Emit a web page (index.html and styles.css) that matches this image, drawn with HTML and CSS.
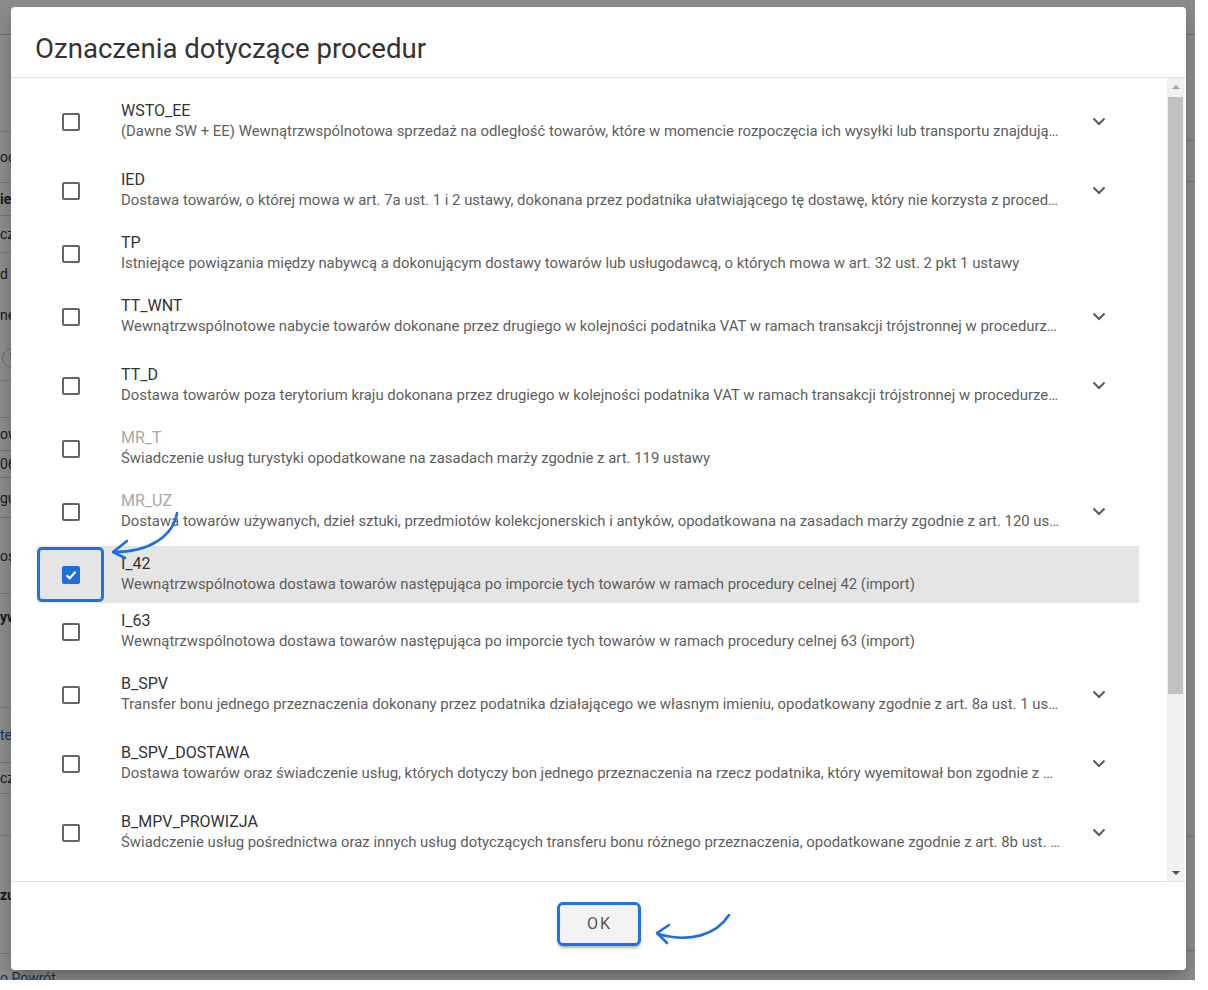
FILE: index.html
```html
<!DOCTYPE html>
<html lang="pl">
<head>
<meta charset="utf-8">
<title>Oznaczenia dotyczące procedur</title>
<link rel="stylesheet" href="styles.css">
</head>
<body>
<div class="screen">
  <div class="page">
    <div class="page-top"></div>
    <div class="page-main">
      <div class="col-left">
        <div class="bg-row h96"></div>
        <div class="bg-row h50"><span class="frag">ocja</span></div>
        <div class="bg-row h32"><span class="frag b">ie</span></div>
        <div class="bg-row h36"><span class="frag">cz</span></div>
        <div class="bg-row h127 stack"><span class="frag">d</span><span class="frag">ne</span><span class="frag chip">1</span></div>
        <div class="bg-row h36"></div>
        <div class="bg-row h32"><span class="frag">ow</span></div>
        <div class="bg-row h26"><span class="frag">06</span></div>
        <div class="bg-row h39"><span class="frag">gu</span></div>
        <div class="bg-row h75"><span class="frag">oś</span></div>
        <div class="bg-row h113 top"><span class="frag b">yw</span></div>
        <div class="bg-row h54"><span class="frag link">te</span></div>
        <div class="bg-row h30"><span class="frag">cz</span></div>
        <div class="bg-row h41"></div>
        <div class="bg-row h117"><span class="frag b">zu</span></div>
        <div class="bg-row last"><span class="frag link">o Powrót</span></div>
      </div>
      <div class="col-right">
        <div class="bg-row h105"></div>
        <div class="bg-row h40"></div>
        <div class="bg-row h654"></div>
        <div class="bg-row h113"></div>
      </div>
    </div>
  </div>

  <div class="overlay"></div>

  <div class="dialog" role="dialog">
    <header class="dlg-head"><h1>Oznaczenia dotyczące procedur</h1></header>

    <div class="dlg-body">
      <div class="list">
        <div class="opt exp">
          <div class="cbcell"><span class="cb"></span></div>
          <div class="txt"><div class="code">WSTO_EE</div><div class="desc">(Dawne SW + EE) Wewnątrzwspólnotowa sprzedaż na odległość towarów, które w momencie rozpoczęcia ich wysyłki lub transportu znajdują się na terytorium kraju</div></div>
          <div class="chev"><svg width="14" height="9" viewBox="0 0 14 9"><path d="M1.5 1.5 L7 7 L12.5 1.5"/></svg></div>
        </div>
        <div class="opt exp">
          <div class="cbcell"><span class="cb"></span></div>
          <div class="txt"><div class="code">IED</div><div class="desc">Dostawa towarów, o której mowa w art. 7a ust. 1 i 2 ustawy, dokonana przez podatnika ułatwiającego tę dostawę, który nie korzysta z procedury szczególnej</div></div>
          <div class="chev"><svg width="14" height="9" viewBox="0 0 14 9"><path d="M1.5 1.5 L7 7 L12.5 1.5"/></svg></div>
        </div>
        <div class="opt">
          <div class="cbcell"><span class="cb"></span></div>
          <div class="txt"><div class="code">TP</div><div class="desc">Istniejące powiązania między nabywcą a dokonującym dostawy towarów lub usługodawcą, o których mowa w art. 32 ust. 2 pkt 1 ustawy</div></div>
          <div class="chev"></div>
        </div>
        <div class="opt exp">
          <div class="cbcell"><span class="cb"></span></div>
          <div class="txt"><div class="code">TT_WNT</div><div class="desc">Wewnątrzwspólnotowe nabycie towarów dokonane przez drugiego w kolejności podatnika VAT w ramach transakcji trójstronnej w procedurze uproszczonej</div></div>
          <div class="chev"><svg width="14" height="9" viewBox="0 0 14 9"><path d="M1.5 1.5 L7 7 L12.5 1.5"/></svg></div>
        </div>
        <div class="opt exp">
          <div class="cbcell"><span class="cb"></span></div>
          <div class="txt"><div class="code">TT_D</div><div class="desc">Dostawa towarów poza terytorium kraju dokonana przez drugiego w kolejności podatnika VAT w ramach transakcji trójstronnej w procedurze uproszczonej</div></div>
          <div class="chev"><svg width="14" height="9" viewBox="0 0 14 9"><path d="M1.5 1.5 L7 7 L12.5 1.5"/></svg></div>
        </div>
        <div class="opt">
          <div class="cbcell"><span class="cb"></span></div>
          <div class="txt"><div class="code dim">MR_T</div><div class="desc">Świadczenie usług turystyki opodatkowane na zasadach marży zgodnie z art. 119 ustawy</div></div>
          <div class="chev"></div>
        </div>
        <div class="opt exp">
          <div class="cbcell"><span class="cb"></span></div>
          <div class="txt"><div class="code dim">MR_UZ</div><div class="desc">Dostawa towarów używanych, dzieł sztuki, przedmiotów kolekcjonerskich i antyków, opodatkowana na zasadach marży zgodnie z art. 120 ustawy</div></div>
          <div class="chev"><svg width="14" height="9" viewBox="0 0 14 9"><path d="M1.5 1.5 L7 7 L12.5 1.5"/></svg></div>
        </div>
        <div class="opt sel">
          <div class="cbcell mark"><span class="cb on"><svg width="14" height="14" viewBox="0 0 14 14"><path d="M2.5 7.2 L5.6 10.2 L11.6 3.8"/></svg></span></div>
          <div class="txt"><div class="code">I_42</div><div class="desc">Wewnątrzwspólnotowa dostawa towarów następująca po imporcie tych towarów w ramach procedury celnej 42 (import)</div></div>
          <div class="chev"></div>
        </div>
        <div class="opt">
          <div class="cbcell"><span class="cb"></span></div>
          <div class="txt"><div class="code">I_63</div><div class="desc">Wewnątrzwspólnotowa dostawa towarów następująca po imporcie tych towarów w ramach procedury celnej 63 (import)</div></div>
          <div class="chev"></div>
        </div>
        <div class="opt exp">
          <div class="cbcell"><span class="cb"></span></div>
          <div class="txt"><div class="code">B_SPV</div><div class="desc">Transfer bonu jednego przeznaczenia dokonany przez podatnika działającego we własnym imieniu, opodatkowany zgodnie z art. 8a ust. 1 ustawy</div></div>
          <div class="chev"><svg width="14" height="9" viewBox="0 0 14 9"><path d="M1.5 1.5 L7 7 L12.5 1.5"/></svg></div>
        </div>
        <div class="opt exp">
          <div class="cbcell"><span class="cb"></span></div>
          <div class="txt"><div class="code">B_SPV_DOSTAWA</div><div class="desc">Dostawa towarów oraz świadczenie usług, których dotyczy bon jednego przeznaczenia na rzecz podatnika, który wyemitował bon zgodnie z art. 8a ust. 4 ustawy</div></div>
          <div class="chev"><svg width="14" height="9" viewBox="0 0 14 9"><path d="M1.5 1.5 L7 7 L12.5 1.5"/></svg></div>
        </div>
        <div class="opt exp">
          <div class="cbcell"><span class="cb"></span></div>
          <div class="txt"><div class="code">B_MPV_PROWIZJA</div><div class="desc">Świadczenie usług pośrednictwa oraz innych usług dotyczących transferu bonu różnego przeznaczenia, opodatkowane zgodnie z art. 8b ust. 2 ustawy</div></div>
          <div class="chev"><svg width="14" height="9" viewBox="0 0 14 9"><path d="M1.5 1.5 L7 7 L12.5 1.5"/></svg></div>
        </div>
      </div>

      <div class="sbar">
        <div class="sb-btn"><span class="tri up"></span></div>
        <div class="sb-track"><div class="sb-thumb"></div></div>
        <div class="sb-btn"><span class="tri down"></span></div>
      </div>
    </div>

    <footer class="dlg-foot"><button class="ok" type="button">OK</button></footer>
  </div>

  <svg class="annot" width="1195" height="980" viewBox="0 0 1195 980">
    <path d="M177 513 C 173 536, 150 552, 114 552"/>
    <path d="M127 541 L113 552 L125 558"/>
    <path d="M729 915 C 716 935, 690 943, 658 934"/>
    <path d="M669 925 L657 933 L667 943"/>
  </svg>
</div>
</body>
</html>
```

FILE: styles.css
```css
* { box-sizing: border-box; margin: 0; padding: 0; }
html, body { background: #fff; }
body { margin: 0; font-family: Roboto, "Liberation Sans", Arial, sans-serif; }

.screen { position: relative; width: 1195px; height: 980px; overflow: hidden; }

/* page behind the modal */
.page { width: 100%; height: 100%; display: flex; flex-direction: column; background: #fff; color: #333; font-size: 14px; }
.page-top { height: 35px; flex: none; border-bottom: 1px solid #c8c8c8; background: #fbfbfb; }
.page-main { flex: 1; display: flex; }
.col-left { flex: 1; display: flex; flex-direction: column; }
.col-right { width: 200px; display: flex; flex-direction: column; }
.bg-row { flex: none; display: flex; align-items: center; border-bottom: 1px solid #d0d0d0; }
.bg-row.stack { flex-direction: column; align-items: flex-start; justify-content: space-around; }
.bg-row.top { align-items: flex-start; padding-top: 14px; }
.bg-row.last { flex: 1; align-items: flex-start; padding-top: 15px; border-bottom: 0; }
.frag { white-space: nowrap; line-height: 18px; }
.frag.b { font-weight: 700; }
.frag.link { color: #2a5db0; }
.frag.chip { border: 1px solid #bbb; border-radius: 10px; padding: 0 6px; margin-left: 2px; }
.h26 { height: 27px; } .h30 { height: 31px; } .h32 { height: 33px; } .h36 { height: 37px; }
.h39 { height: 40px; } .h40 { height: 41px; } .h41 { height: 42px; } .h50 { height: 51px; }
.h54 { height: 55px; } .h75 { height: 76px; } .h96 { height: 97px; } .h105 { height: 106px; }
.h113 { height: 114px; } .h117 { height: 118px; } .h127 { height: 128px; } .h654 { height: 655px; }

.overlay { position: absolute; inset: 0; background: rgba(0, 0, 0, 0.45); }

/* dialog */
.dialog {
  position: absolute; left: 11px; top: 7px; width: 1175px; height: 963px;
  background: #fff; border-radius: 4px; overflow: hidden;
  display: flex; flex-direction: column;
  box-shadow: 0 8px 12px -6px rgba(0, 0, 0, 0.25), 0 14px 22px 2px rgba(0, 0, 0, 0.12);
}
.dlg-head { flex: none; height: 71px; padding: 26px 24px 0; border-bottom: 1px solid #e2e2e2; }
.dlg-head h1 { font-size: 27.6px; font-weight: 400; line-height: 32px; color: #333; }

.dlg-body { flex: 1; min-height: 0; display: flex; overflow: hidden; }
.list { flex: 1; min-width: 0; padding: 9px 28px 0 26px; display: flex; flex-direction: column; overflow: hidden; }
.opt { flex: none; height: 57px; display: flex; align-items: center; }
.opt.exp { height: 69px; }
.opt.sel { background: #e5e5e5; }

.cbcell { flex: none; width: 67px; height: 55px; border: 3px solid transparent; border-radius: 5px; display: flex; align-items: center; justify-content: center; }
.cbcell.mark { border-color: #2171e0; }
.cb { width: 18px; height: 18px; border: 2px solid #646464; border-radius: 2px; display: flex; align-items: center; justify-content: center; }
.cb.on { background: #1f6fd8; border-color: #1f6fd8; }
.cb svg path { fill: none; stroke: #fff; stroke-width: 2; }

.txt { flex: 1; min-width: 0; margin: 0 6px 0 17px; }
.code { font-size: 16px; line-height: 20px; color: #333; }
.code.dim { color: #a8a8a8; }
.desc { font-size: 14.9px; line-height: 21px; color: #5e5e5e; white-space: nowrap; overflow: hidden; text-overflow: ellipsis; }

.chev { flex: none; width: 48px; margin: 0 16px 0 9px; display: flex; justify-content: center; align-items: center; }
.chev svg path { fill: none; stroke: #5a5a5a; stroke-width: 2; }

.sbar { flex: none; width: 17px; margin-right: 2px; background: #f1f1f1; display: flex; flex-direction: column; }
.sb-btn { flex: none; height: 17px; display: flex; align-items: center; justify-content: center; }
.sb-track { flex: 1; padding: 2px 1px 0; }
.sb-thumb { height: 597px; background: #c1c1c1; }
.tri { width: 0; height: 0; border-left: 4px solid transparent; border-right: 4px solid transparent; }
.tri.up { border-bottom: 4px solid #a3a3a3; }
.tri.down { border-top: 4px solid #505050; }

.dlg-foot { flex: none; height: 89px; padding-bottom: 5px; border-top: 1px solid #e2e2e2; display: flex; align-items: center; justify-content: center; }
.ok {
  width: 84px; height: 44px; border: 3px solid #2171e0; border-radius: 6px;
  background: #f3f3f3; color: #555; font-family: Roboto, "Liberation Sans", Arial, sans-serif;
  font-size: 16px; font-weight: 400; letter-spacing: 2px; padding-left: 2px;
  box-shadow: 0 3px 3px -1px rgba(0, 0, 0, 0.3);
}

.annot { position: absolute; left: 0; top: 0; pointer-events: none; }
.annot path { fill: none; stroke: #1f6ee0; stroke-width: 2.6; stroke-linecap: round; stroke-linejoin: round; }
```
